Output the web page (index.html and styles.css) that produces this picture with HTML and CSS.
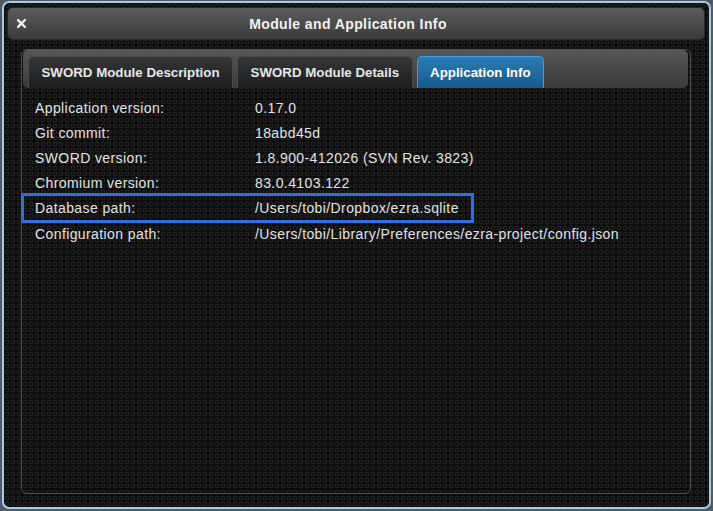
FILE: index.html
```html
<!DOCTYPE html>
<html>
<head>
<meta charset="utf-8">
<link rel="stylesheet" href="styles.css">
</head>
<body>
<div class="window">
  <div class="titlebar">
    <span class="close">
      <svg width="9" height="9" viewBox="0 0 9 9"><path d="M1 1 L8 8 M8 1 L1 8" stroke="#f4f4f4" stroke-width="2.4" stroke-linecap="square"/></svg>
    </span>
    <span class="title">Module and Application Info</span>
  </div>
  <div class="panel">
    <div class="tabbar">
      <div class="tab">SWORD Module Description</div>
      <div class="tab">SWORD Module Details</div>
      <div class="tab active">Application Info</div>
    </div>
    <div class="rows">
      <div class="label">Application version:</div><div class="value">0.17.0</div>
      <div class="label">Git commit:</div><div class="value">18abd45d</div>
      <div class="label">SWORD version:</div><div class="value">1.8.900-412026 (SVN Rev. 3823)</div>
      <div class="label">Chromium version:</div><div class="value">83.0.4103.122</div>
      <div class="label">Database path:</div><div class="value">/Users/tobi/Dropbox/ezra.sqlite</div>
      <div class="label">Configuration path:</div><div class="value">/Users/tobi/Library/Preferences/ezra-project/config.json</div>
    </div>
    <div class="highlight"></div>
  </div>
</div>
</body>
</html>
```

FILE: styles.css
```css
html, body {
  margin: 0;
  padding: 0;
}
body {
  width: 713px;
  height: 511px;
  background: #4f5b66;
  overflow: hidden;
  font-family: "Liberation Sans", Arial, sans-serif;
}
.window {
  box-sizing: border-box;
  margin: 1px 2px 0 2px;
  width: 709px;
  height: 508px;
  border: 2px solid #a8cbe6;
  border-radius: 7px;
  padding: 4px 4px 0 3px;
  display: flex;
  flex-direction: column;
  background-color: #0b0b0b;
  background-image: radial-gradient(circle, transparent 1.2px, #222222 1.6px, #222222 2.2px, transparent 2.7px);
  background-size: 6px 6px;
}
.titlebar {
  height: 33px;
  box-sizing: border-box;
  border-radius: 6px;
  background: linear-gradient(#5c5c5c, #3b3b3b);
  border: 1px solid #2a2a2a;
  display: flex;
  align-items: center;
  position: relative;
}
.close {
  position: absolute;
  left: 9px;
  top: 11px;
  display: flex;
}
.title {
  flex: 1;
  text-align: center;
  padding-right: 16px;
  color: #f2f2f2;
  font-weight: bold;
  font-size: 14px;
  letter-spacing: 0.4px;
}
.panel {
  margin: 9px 14px 0 14px;
  height: 445px;
  box-sizing: border-box;
  border: 1px solid #4e4e4e;
  border-radius: 6px;
  padding: 0 2px 0 1px;
  position: relative;
}
.tabbar {
  height: 38px;
  box-sizing: border-box;
  border-radius: 5px;
  background: linear-gradient(#575757, #3a3a3a);
  padding: 6px 5px 0 5px;
  display: flex;
  gap: 4px;
  align-items: stretch;
}
.tab {
  padding: 0 12.5px 1px 12.5px;
  border-radius: 5px 5px 0 0;
  background: linear-gradient(#363636, #1e1e1e);
  border: 1px solid #4a4a4a;
  border-bottom: none;
  color: #e6e6e6;
  font-weight: bold;
  font-size: 13.3px;
  display: flex;
  align-items: center;
}
.tab.active {
  background: linear-gradient(#2b7cb4, #165a8c);
  border-color: #3f9ee0;
  color: #ffffff;
}
.rows {
  display: grid;
  grid-template-columns: 220px 1fr;
  grid-auto-rows: 25.2px;
  align-items: center;
  padding: 7px 0 0 12px;
  font-size: 14px;
  letter-spacing: 0.4px;
  color: #e2e2e2;
}
.highlight {
  position: absolute;
  left: -1px;
  top: 143px;
  width: 453px;
  height: 30px;
  box-sizing: border-box;
  border: 3px solid #2f6ee4;
}
```
